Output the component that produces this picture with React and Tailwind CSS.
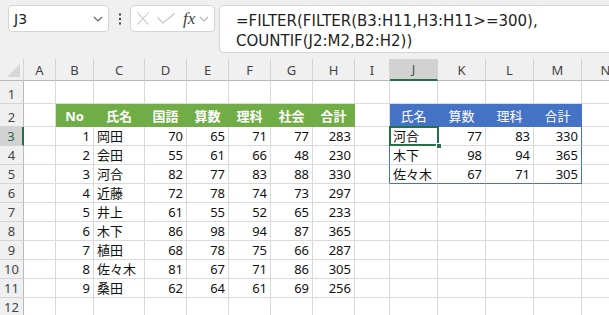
import React from "react";

const GRID =
  "grid grid-cols-[24px_32px_38px_51px_42px_42px_42px_42px_42px_35px_48px_48px_48px_48px_48px]";
const LETTERS = ["A", "B", "C", "D", "E", "F", "G", "H", "I", "J", "K", "L", "M", "N"];

const DATA = [
  [1, "岡田", 70, 65, 71, 77, 283],
  [2, "会田", 55, 61, 66, 48, 230],
  [3, "河合", 82, 77, 83, 88, 330],
  [4, "近藤", 72, 78, 74, 73, 297],
  [5, "井上", 61, 55, 52, 65, 233],
  [6, "木下", 86, 98, 94, 87, 365],
  [7, "植田", 68, 78, 75, 66, 287],
  [8, "佐々木", 81, 67, 71, 86, 305],
  [9, "桑田", 62, 64, 61, 69, 256],
];
const RESULT = [
  ["河合", 77, 83, 330],
  ["木下", 98, 94, 365],
  ["佐々木", 67, 71, 305],
];
const GREEN_HEAD = ["No", "氏名", "国語", "算数", "理科", "社会", "合計"];
const BLUE_HEAD = ["氏名", "算数", "理科", "合計"];

function cellInfo(r, c) {
  // c: 0=A ... 13=N
  let text = "";
  let align = "justify-end";
  let bg = "";
  let rCol = "border-r-[#dadada]";
  let bCol = "border-b-[#dadada]";
  let txt = "text-[#111]";
  let weight = "";
  if (r === 2 && c >= 1 && c <= 7) {
    text = GREEN_HEAD[c - 1];
    align = "justify-center";
    bg = "bg-[#70ad47]";
    rCol = "border-r-[#70ad47]";
    bCol = "border-b-[#70ad47]";
    txt = "text-white";
    weight = "font-bold";
  } else if (r === 2 && c >= 9 && c <= 12) {
    text = BLUE_HEAD[c - 9];
    align = "justify-center";
    bg = "bg-[#4472c4]";
    rCol = "border-r-[#4472c4]";
    bCol = "border-b-[#4472c4]";
    txt = "text-white";
  } else if (r >= 3 && r <= 11 && c >= 1 && c <= 7) {
    const row = DATA[r - 3];
    text = String(row[c - 1]);
    align = c === 2 ? "justify-start" : "justify-end";
  }
  if (r >= 3 && r <= 5) {
    if (c >= 9 && c <= 12) {
      const row = RESULT[r - 3];
      text = String(row[c - 9]);
      align = c === 9 ? "justify-start" : "justify-end";
    }
    if (c === 8 || c === 12) rCol = "border-r-[#4472c4]";
    if (r === 5 && c >= 9 && c <= 12) bCol = "border-b-[#4472c4]";
  }
  return { text, align, bg, rCol, bCol, txt, weight };
}

function Row({ r }) {
  const h = r <= 2 ? "h-[23px]" : "h-[19px]";
  const active = r === 3;
  return (
    <div className={`${GRID} ${h}`}>
      <div
        className={`flex items-end justify-center pb-[1px] border-b border-b-[#d4d4d4] text-[13px] leading-[16px] font-['Noto_Sans',sans-serif] ${
          active
            ? "bg-[#d2d2d2] border-r-2 border-r-[#217346] text-[#1d6b40]"
            : "bg-[#f0f0f0] border-r border-r-[#b9b9b9] text-[#444]"
        }`}
      >
        {r}
      </div>
      {LETTERS.map((L, c) => {
        const info = cellInfo(r, c);
        const selected = r === 3 && c === 9;
        return (
          <div
            key={L}
            className={`relative flex items-end pb-[1px] px-[3px] border-r border-b whitespace-nowrap text-[13px] leading-[16px] font-['Noto_Sans','Noto_Sans_CJK_JP',sans-serif] ${info.align} ${info.bg} ${info.rCol} ${info.bCol} ${info.txt} ${info.weight} ${r === 2 ? "pb-[2px]" : ""}`}
          >
            {info.text}
            {selected && (
              <>
                <div className="absolute left-[-1px] top-[-1px] right-[-2px] bottom-[-1px] border-2 border-[#217346] z-10" />
                <div className="absolute right-[-5px] bottom-[-4px] w-[6px] h-[6px] bg-[#217346] border border-white z-20" />
              </>
            )}
          </div>
        );
      })}
    </div>
  );
}

function Chevron({ color = "#6b5f5f" }) {
  return (
    <svg width="10" height="6" viewBox="0 0 10 6">
      <path d="M1 1 L5 5 L9 1" fill="none" stroke={color} strokeWidth="1.2" />
    </svg>
  );
}

export default function App() {
  return (
    <div className="w-[609px] h-[315px] overflow-hidden bg-[#f0f0f0] font-['Noto_Sans',sans-serif]">
      {/* Formula bar */}
      <div className="h-[59px] flex items-start pt-[5px] pl-[8px]">
        <div className="w-[101px] h-[27px] rounded-[4px] border border-[#d4d4d4] bg-white flex items-center justify-between pl-[5px] pr-[5px]">
          <span className="text-[14px] text-[#222] font-['DejaVu_Sans',sans-serif] leading-none">J3</span>
          <Chevron />
        </div>
        <div className="w-[21px] h-[27px] flex items-center justify-center">
          <svg width="4" height="12" viewBox="0 0 4 12">
            <rect x="1" y="0.5" width="2" height="2" fill="#444" />
            <rect x="1" y="5" width="2" height="2" fill="#444" />
            <rect x="1" y="9.5" width="2" height="2" fill="#444" />
          </svg>
        </div>
        <div className="w-[85px] h-[27px] rounded-[4px] border border-[#d4d4d4] bg-white flex items-center pl-[6px] pr-[2px]">
          <svg width="12" height="13" viewBox="0 0 12 13">
            <path d="M0.5 0.5 L11.5 12.5 M11.5 0.5 L0.5 12.5" stroke="#c2c2c2" strokeWidth="1.1" fill="none" />
          </svg>
          <svg width="18" height="11" viewBox="0 0 18 11" className="ml-[8px]">
            <path d="M0.5 4.5 L6 10 L17.5 0.5" stroke="#c2c2c2" strokeWidth="1.1" fill="none" />
          </svg>
          <span className="ml-[8px] font-['Liberation_Serif',serif] italic text-[17px] leading-none text-[#444] mb-[1px]">
            fx
          </span>
          <span className="ml-[4px] mt-[1px]">
            <Chevron color="#b5b5b5" />
          </span>
        </div>
        <div className="ml-[4px] flex-1 mr-[-10px] h-[48px] rounded-[4px] border border-[#d4d4d4] bg-white pl-[16px] pt-[5px] font-['DejaVu_Sans',sans-serif] text-[15px] leading-[20px] text-[#1f1f1f] whitespace-nowrap">
          <div>=FILTER(FILTER(B3:H11,H3:H11&gt;=300),</div>
          <div>COUNTIF(J2:M2,B2:H2))</div>
        </div>
      </div>

      {/* Column headers */}
      <div className={`${GRID} h-[22px]`}>
        <div className="relative bg-[#f0f0f0] border-r border-r-[#d4d4d4] border-b border-b-[#b9b9b9]">
          <svg className="absolute left-0 top-0" width="24" height="22" viewBox="0 0 24 22">
            <polygon points="20,5 20,18 7,18" fill="#d6d6d6" />
          </svg>
        </div>
        {LETTERS.map((L) => (
          <div
            key={L}
            className={`flex items-center justify-center text-[13px] leading-none pt-[1px] ${
              L === "J"
                ? "bg-[#d2d2d2] border-r border-r-[#d4d4d4] border-b-2 border-b-[#217346] text-[#3d5a49]"
                : "bg-[#f0f0f0] border-r border-r-[#d4d4d4] border-b border-b-[#b9b9b9] text-[#444]"
            }`}
          >
            {L}
          </div>
        ))}
      </div>

      {/* Rows */}
      <div className="bg-white">
        {Array.from({ length: 12 }, (_, i) => (
          <Row key={i} r={i + 1} />
        ))}
      </div>
    </div>
  );
}
